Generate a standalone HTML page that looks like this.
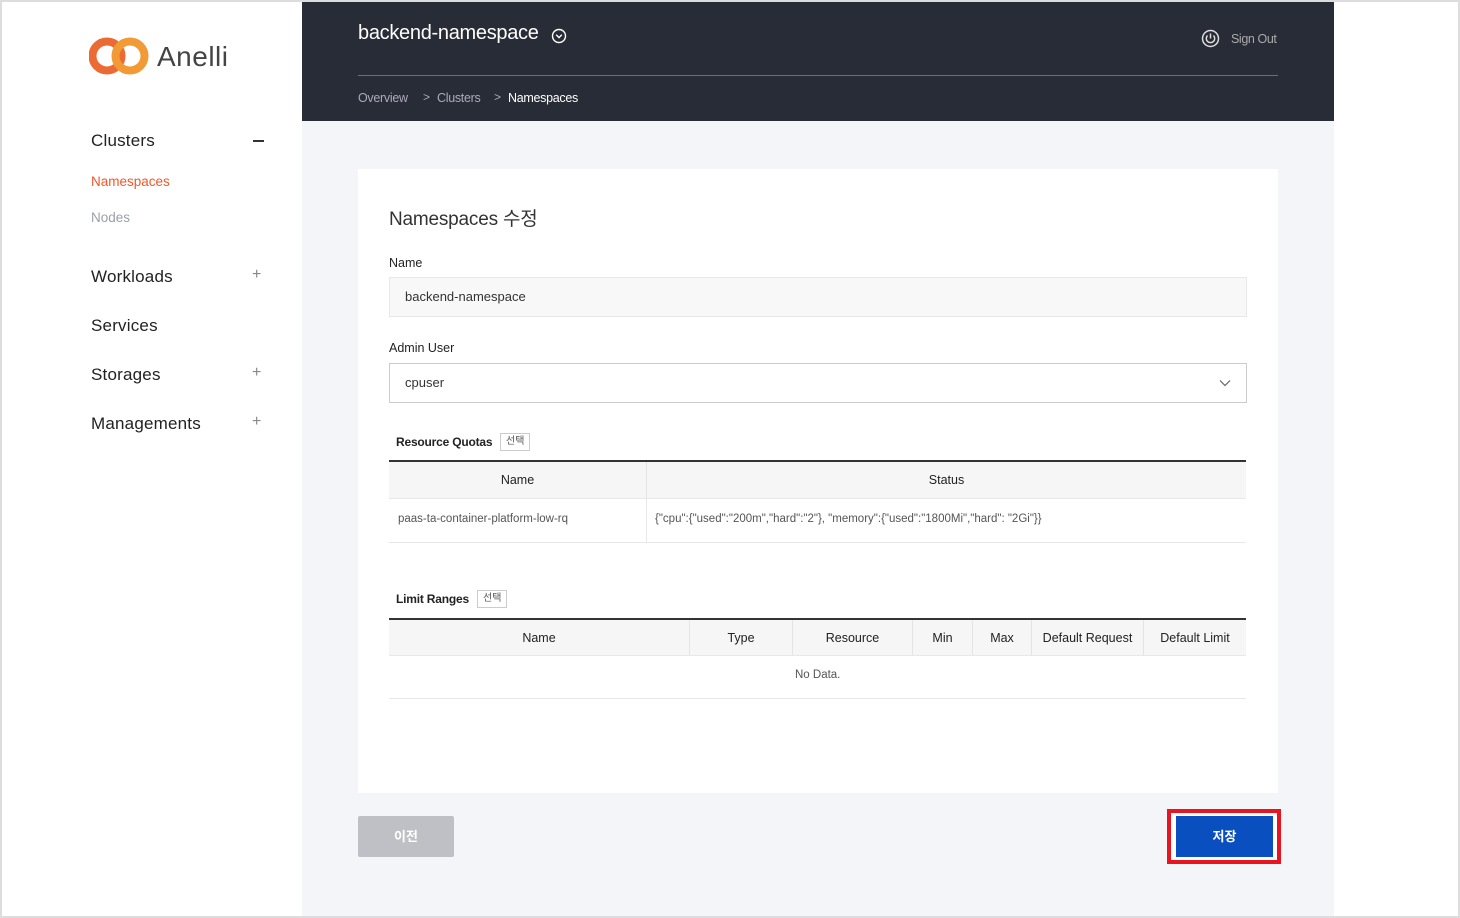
<!DOCTYPE html>
<html><head><meta charset="utf-8">
<style>
*{margin:0;padding:0;box-sizing:border-box}
body{width:1460px;height:918px;overflow:hidden;background:#ddd;font-family:"Liberation Sans","Noto Sans CJK KR",sans-serif;position:relative}
.a{position:absolute}
#page{left:2px;top:2px;width:1456px;height:914px;background:#fff}
#side{left:2px;top:2px;width:300px;height:914px;background:#fff}
#main{left:302px;top:2px;width:1032px;height:914px;background:#f4f5f9}
#hdr{left:302px;top:2px;width:1032px;height:119px;background:#282c37}
.nav{left:91px;font-size:17px;color:#222;letter-spacing:0.2px}
.pm{left:252px;color:#888;font-size:16px}
#card{left:358px;top:169px;width:920px;height:624px;background:#fff}
.lbl{font-size:12.5px;color:#222}
.th{background:#f6f6f6;font-size:12.5px;color:#222;text-align:center;height:36px;line-height:36px;border-right:1px solid #e4e4e4}
.btnsel{font-size:10px;color:#555;border:1px solid #ccc;height:18px;line-height:16px;padding:0 5px;background:#fff}
.bc{font-size:12.5px;letter-spacing:-0.3px}
</style></head><body>
<div class="a" id="page"></div>
<div class="a" id="side"></div>
<div class="a" id="main"></div>
<div class="a" id="hdr"></div>

<svg class="a" style="left:89px;top:36px" width="62" height="40" viewBox="0 0 62 40">
<circle cx="18" cy="20" r="14.5" fill="none" stroke="#ec6a33" stroke-width="8"/>
<circle cx="41" cy="20" r="14.5" fill="none" stroke="#f29a35" stroke-width="8"/>
</svg>
<div class="a" style="left:157px;top:41px;font-size:28px;color:#444;letter-spacing:0.5px">Anelli</div>

<div class="a nav" style="top:131px">Clusters</div>
<div class="a" style="left:253px;top:140px;width:11px;height:2px;background:#333"></div>
<div class="a" style="left:91px;top:174px;font-size:13.5px;color:#f2572a">Namespaces</div>
<div class="a" style="left:91px;top:210px;font-size:13.5px;color:#9aa0aa">Nodes</div>
<div class="a nav" style="top:267px">Workloads</div><div class="a pm" style="top:266px">+</div>
<div class="a nav" style="top:316px">Services</div>
<div class="a nav" style="top:365px">Storages</div><div class="a pm" style="top:364px">+</div>
<div class="a nav" style="top:414px">Managements</div><div class="a pm" style="top:413px">+</div>

<div class="a" style="left:358px;top:22px;font-size:20px;color:#fff;letter-spacing:-0.3px">backend-namespace</div>
<svg class="a" style="left:551px;top:28px" width="16" height="16" viewBox="0 0 16 16"><circle cx="8" cy="8" r="6.5" fill="none" stroke="#fff" stroke-width="1.4"/><path d="M5.2 6.8 8 9.6 10.8 6.8" fill="none" stroke="#fff" stroke-width="1.4"/></svg>
<svg class="a" style="left:1201px;top:29px" width="19" height="19" viewBox="0 0 19 19"><circle cx="9.5" cy="9.5" r="8" fill="none" stroke="#ddd" stroke-width="1.5"/><path d="M6.5 6.5a4.2 4.2 0 1 0 6 0M9.5 4.5v5" fill="none" stroke="#ddd" stroke-width="1.5"/></svg>
<div class="a" style="left:1231px;top:32px;font-size:12.5px;color:#aaa;letter-spacing:-0.4px">Sign Out</div>
<div class="a" style="left:358px;top:75px;width:920px;height:1px;background:#6a6e78"></div>
<div class="a bc" style="left:358px;top:91px;color:#aab">Overview</div>
<div class="a" style="left:423px;top:90px;font-size:12px;color:#aab">&gt;</div>
<div class="a bc" style="left:437px;top:91px;color:#aab">Clusters</div>
<div class="a" style="left:494px;top:90px;font-size:12px;color:#aab">&gt;</div>
<div class="a bc" style="left:508px;top:91px;color:#fff">Namespaces</div>

<div class="a" id="card"></div>
<div class="a" style="left:389px;top:204px;font-size:19px;color:#333;letter-spacing:-0.2px">Namespaces 수정</div>
<div class="a lbl" style="left:389px;top:256px">Name</div>
<div class="a" style="left:389px;top:277px;width:858px;height:40px;background:#f8f8f8;border:1px solid #e8e8e8;font-size:13px;color:#333;padding:11px 15px">backend-namespace</div>
<div class="a lbl" style="left:389px;top:341px">Admin User</div>
<div class="a" style="left:389px;top:363px;width:858px;height:40px;background:#fff;border:1px solid #ccc;font-size:13px;color:#333;padding:11px 15px">cpuser</div>
<svg class="a" style="left:1219px;top:379px" width="12" height="8" viewBox="0 0 12 8"><path d="M1 1.5 6 6.5 11 1.5" fill="none" stroke="#666" stroke-width="1.2"/></svg>

<div class="a lbl" style="left:396px;top:435px;font-weight:bold;font-size:12px;letter-spacing:-0.2px">Resource Quotas</div>
<div class="a btnsel" style="left:500px;top:433px">선택</div>
<div class="a" style="left:389px;top:460px;width:857px;height:2px;background:#333"></div>
<div class="a th" style="left:389px;top:462px;width:258px">Name</div>
<div class="a th" style="left:647px;top:462px;width:599px;border-right:none">Status</div>
<div class="a" style="left:389px;top:498px;width:857px;height:1px;background:#e8e8e8"></div>
<div class="a" style="left:389px;top:542px;width:857px;height:1px;background:#e8e8e8"></div>
<div class="a" style="left:646px;top:499px;width:1px;height:43px;background:#e8e8e8"></div>
<div class="a" style="left:398px;top:513px;font-size:11.5px;color:#555">paas-ta-container-platform-low-rq</div>
<div class="a" style="left:655px;top:513px;font-size:11.5px;color:#555">{"cpu":{"used":"200m","hard":"2"}, "memory":{"used":"1800Mi","hard": "2Gi"}}</div>

<div class="a lbl" style="left:396px;top:592px;font-weight:bold;font-size:12px;letter-spacing:-0.2px">Limit Ranges</div>
<div class="a btnsel" style="left:477px;top:590px">선택</div>
<div class="a" style="left:389px;top:618px;width:857px;height:2px;background:#333"></div>
<div class="a th" style="left:389px;top:620px;width:301px">Name</div>
<div class="a th" style="left:690px;top:620px;width:103px">Type</div>
<div class="a th" style="left:793px;top:620px;width:120px">Resource</div>
<div class="a th" style="left:913px;top:620px;width:60px">Min</div>
<div class="a th" style="left:973px;top:620px;width:59px">Max</div>
<div class="a th" style="left:1032px;top:620px;width:112px">Default Request</div>
<div class="a th" style="left:1144px;top:620px;width:102px;border-right:none">Default Limit</div>
<div class="a" style="left:389px;top:655px;width:857px;height:1px;background:#e8e8e8"></div>
<div class="a" style="left:795px;top:669px;font-size:11.5px;color:#555">No Data.</div>
<div class="a" style="left:389px;top:698px;width:857px;height:1px;background:#e8e8e8"></div>

<div class="a" style="left:358px;top:816px;width:96px;height:41px;background:#bfc0c5;border-radius:2px;color:#fff;font-size:13px;font-weight:bold;text-align:center;line-height:41px">이전</div>
<div class="a" style="left:1167px;top:809px;width:114px;height:55px;border:4px solid #e8141f;background:#fff"></div>
<div class="a" style="left:1176px;top:816px;width:97px;height:41px;background:#0a4fbf;color:#fff;font-size:13px;font-weight:bold;text-align:center;line-height:41px">저장</div>
</body></html>
